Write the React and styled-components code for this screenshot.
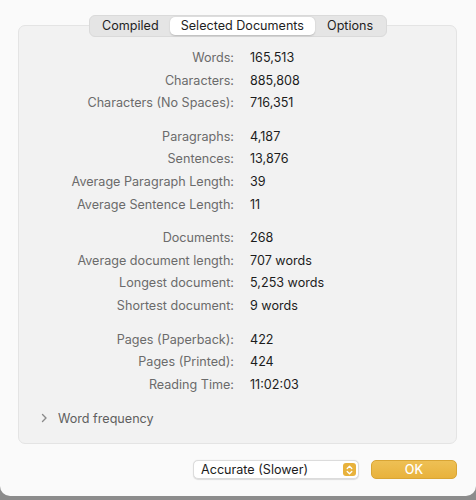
import React from "react";
import styled, { createGlobalStyle } from "styled-components";

const Global = createGlobalStyle`
  html, body {
    margin: 0;
    padding: 0;
    background: #8c8c8c;
  }
  body {
    font-family: Inter, "Liberation Sans", sans-serif;
    -webkit-font-smoothing: antialiased;
  }
`;

const Window = styled.div`
  width: 476px;
  height: 496px;
  background: #fafafa;
  border-radius: 0 0 10px 10px;
  box-sizing: border-box;
  padding: 25px 19px 0 18px;
`;

const Panel = styled.div`
  height: 419px;
  box-sizing: border-box;
  background: #f2f2f2;
  border: 1px solid #e4e4e4;
  border-radius: 7px;
  padding: 21px 0 0 0;
  position: relative;
`;

const Tabs = styled.div`
  position: absolute;
  top: -11px;
  left: 70px;
  display: flex;
  align-items: center;
  height: 20px;
  padding: 0 1px;
  background: #e5e5e5;
  border: 1px solid #dadada;
  border-radius: 6px;
`;

const Tab = styled.div`
  height: 18px;
  line-height: 18px;
  padding: 0 ${(p) => p.$pad}px;
  font-size: 12.6px;
  color: #1e1e1e;
  border-radius: 5px;
  background: ${(p) => (p.$active ? "#ffffff" : "transparent")};
  box-shadow: ${(p) => (p.$active ? "0 0.5px 1.5px rgba(0,0,0,0.18)" : "none")};
`;

const Group = styled.div`
  display: grid;
  grid-template-columns: 215px 1fr;
  column-gap: 16px;
  margin-bottom: 11px;
`;

const Label = styled.div`
  text-align: right;
  font-size: 12.6px;
  line-height: 22.6px;
  color: #6b6b6b;
`;

const Value = styled.div`
  font-size: 12.6px;
  line-height: 22.6px;
  color: #1c1c1c;
`;

const Disclosure = styled.div`
  display: flex;
  align-items: center;
  gap: 10px;
  margin: 9px 0 0 22px;
  height: 22px;
  font-size: 12.6px;
  color: #5f5f5f;
`;

const Footer = styled.div`
  display: flex;
  justify-content: flex-end;
  align-items: center;
  gap: 12px;
  padding: 16px 0 0 0;
`;

const Popup = styled.div`
  width: 166px;
  height: 19px;
  box-sizing: border-box;
  display: flex;
  align-items: center;
  justify-content: space-between;
  padding: 0 2px 0 7px;
  background: #ffffff;
  border: 1px solid #dcdcdc;
  border-radius: 5px;
  box-shadow: 0 0.5px 1px rgba(0,0,0,0.12);
  font-size: 12.6px;
  color: #1c1c1c;
`;

const Stepper = styled.div`
  width: 13px;
  height: 13px;
  border-radius: 3px;
  background: #e8b23c;
  display: flex;
  align-items: center;
  justify-content: center;
`;

const OkButton = styled.div`
  width: 84px;
  height: 17px;
  line-height: 17px;
  text-align: center;
  border-radius: 5px;
  background: linear-gradient(#eec055, #e8b23c);
  border: 0.5px solid #d9a534;
  color: #ffffff;
  font-size: 12.6px;
  font-weight: 500;
`;

const groups = [
  [
    ["Words:", "165,513"],
    ["Characters:", "885,808"],
    ["Characters (No Spaces):", "716,351"],
  ],
  [
    ["Paragraphs:", "4,187"],
    ["Sentences:", "13,876"],
    ["Average Paragraph Length:", "39"],
    ["Average Sentence Length:", "11"],
  ],
  [
    ["Documents:", "268"],
    ["Average document length:", "707 words"],
    ["Longest document:", "5,253 words"],
    ["Shortest document:", "9 words"],
  ],
  [
    ["Pages (Paperback):", "422"],
    ["Pages (Printed):", "424"],
    ["Reading Time:", "11:02:03"],
  ],
];

export default function App() {
  return (
    <>
      <Global />
      <Window>
        <Panel>
          <Tabs>
            <Tab $pad={11}>Compiled</Tab>
            <Tab $pad={11} $active>
              Selected Documents
            </Tab>
            <Tab $pad={12}>Options</Tab>
          </Tabs>
          {groups.map((g, i) => (
            <Group key={i}>
              {g.map(([l, v]) => (
                <React.Fragment key={l}>
                  <Label>{l}</Label>
                  <Value>{v}</Value>
                </React.Fragment>
              ))}
            </Group>
          ))}
          <Disclosure>
            <svg width="7" height="10" viewBox="0 0 7 10">
              <path d="M1.5 1.5 L5 5 L1.5 8.5" fill="none" stroke="#8a8a8a" strokeWidth="1.4" strokeLinecap="round" strokeLinejoin="round" />
            </svg>
            Word frequency
          </Disclosure>
        </Panel>
        <Footer>
          <Popup>
            Accurate (Slower)
            <Stepper>
              <svg width="7" height="10" viewBox="0 0 7 10">
                <path d="M1.2 3.5 L3.5 1.3 L5.8 3.5 M1.2 6.5 L3.5 8.7 L5.8 6.5" fill="none" stroke="#ffffff" strokeWidth="1.3" strokeLinecap="round" strokeLinejoin="round" />
              </svg>
            </Stepper>
          </Popup>
          <OkButton>OK</OkButton>
        </Footer>
      </Window>
    </>
  );
}
